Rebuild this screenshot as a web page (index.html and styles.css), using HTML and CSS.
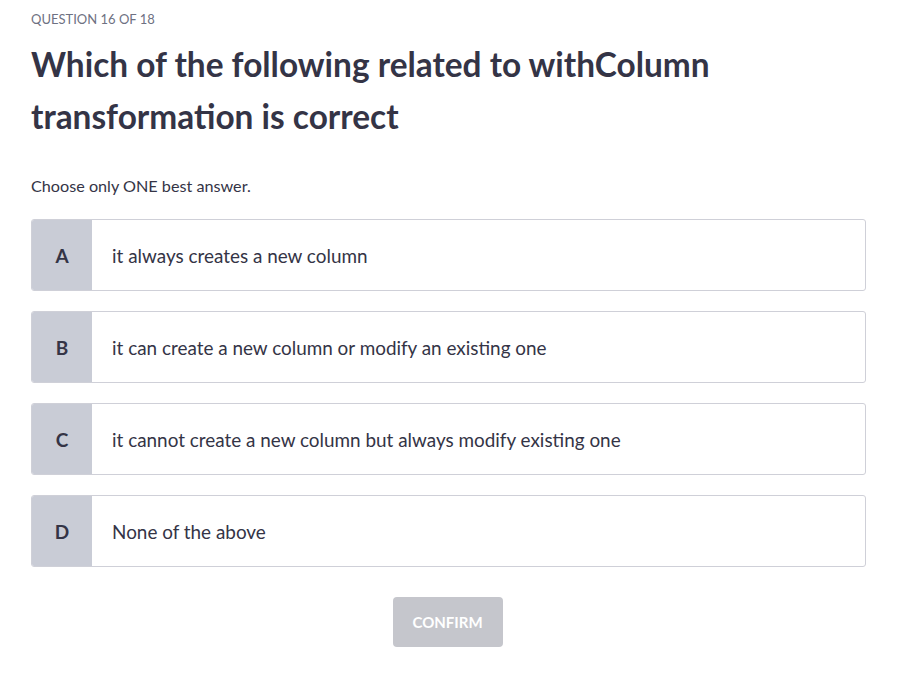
FILE: index.html
```html
<!DOCTYPE html>
<html>
<head>
<meta charset="utf-8">
<link rel="stylesheet" href="styles.css">
</head>
<body>
<main class="quiz">
  <div class="counter">QUESTION 16 OF 18</div>
  <h1 class="title">Which of the following related to withColumn transformation is correct</h1>
  <p class="hint">Choose only ONE best answer.</p>
  <div class="options">
    <div class="option"><div class="letter">A</div><div class="text">it always creates a new column</div></div>
    <div class="option"><div class="letter">B</div><div class="text">it can create a new column or modify an existing one</div></div>
    <div class="option"><div class="letter">C</div><div class="text">it cannot create a new column but always modify existing one</div></div>
    <div class="option"><div class="letter">D</div><div class="text">None of the above</div></div>
  </div>
  <div class="actions"><button class="confirm">CONFIRM</button></div>
</main>
</body>
</html>
```
FILE: styles.css
```css
html, body { margin: 0; padding: 0; background: #fff; }
body { font-family: Lato, "Open Sans", sans-serif; color: #343446; }
.quiz { width: 835px; padding: 10px 0 0 31px; }
.counter { font-size: 13px; line-height: 18px; color: #6e7182; letter-spacing: 0; }
.title { margin: 10px 0 0; font-size: 33.4px; line-height: 52px; font-weight: 700; color: #343446; width: 700px; }
.hint { margin: 34px 0 0; font-size: 16.2px; line-height: 20px; color: #343446; }
.options { margin-top: 23px; display: flex; flex-direction: column; gap: 20px; }
.option { display: flex; height: 70px; border: 1px solid #cfd0d8; border-radius: 3px; overflow: hidden; }
.letter { width: 60px; background: #c9ccd6; display: flex; align-items: center; justify-content: center; font-size: 19px; font-weight: 700; color: #343446; }
.text { display: flex; align-items: center; padding-left: 20px; font-size: 18.9px; color: #343446; }
.actions { display: flex; justify-content: center; margin-top: 30px; padding-right: 2px; }
.confirm { width: 110px; height: 50px; border: 0; border-radius: 4px; background: #c5c6cc; color: #fff; font-family: inherit; font-size: 15px; font-weight: 700; }
```
